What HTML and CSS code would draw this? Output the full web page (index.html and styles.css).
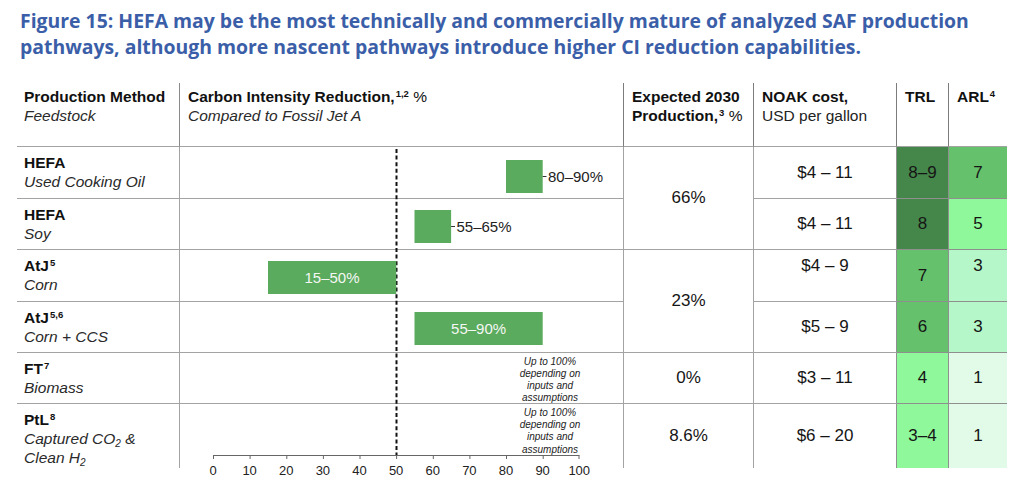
FILE: index.html
```html
<!DOCTYPE html>
<html lang="en">
<head>
<meta charset="utf-8">
<title>Figure 15: SAF production pathways</title>
<link rel="stylesheet" href="styles.css">
</head>
<body>
<div class="page">
  <h1 class="title">Figure 15: HEFA may be the most technically and commercially mature of analyzed SAF production<br>pathways, although more nascent pathways introduce higher CI reduction capabilities.</h1>

  <div class="table">
    <!-- header -->
    <div class="hcell"><span class="hb">Production Method</span><span class="hi">Feedstock</span></div>
    <div class="hcell"><span class="hb">Carbon Intensity Reduction,<sup>1,2</sup> <span class="reg">%</span></span><span class="hi">Compared to Fossil Jet A</span></div>
    <div class="hcell"><span class="hb">Expected 2030</span><span class="hb">Production,<sup>3</sup> <span class="reg">%</span></span></div>
    <div class="hcell"><span class="hb">NOAK cost,</span><span class="hr">USD per gallon</span></div>
    <div class="hcell"><span class="hb">TRL</span></div>
    <div class="hcell hlast"><span class="hb">ARL<sup>4</sup></span></div>

    <!-- row 1 -->
    <div class="label"><span class="hb">HEFA</span><span class="hi">Used Cooking Oil</span></div>
    <div class="chart-col">
      <div class="crow"></div><div class="crow"></div><div class="crow"></div>
      <div class="crow"></div><div class="crow"></div><div class="crow clast"></div>
      <svg class="chart" width="444" height="321" viewBox="0 0 444 321" aria-label="Carbon intensity reduction chart">
        <line class="dash" x1="216.5" y1="2" x2="216.5" y2="308"/>
        <rect class="bar" x="326" y="13" width="36.7" height="33"/>
        <line class="lead" x1="362.7" y1="29.5" x2="366.5" y2="29.5"/>
        <text class="blab" x="368" y="35">80–90%</text>
        <rect class="bar" x="234.5" y="63" width="36.6" height="33"/>
        <line class="lead" x1="271.1" y1="79.5" x2="275" y2="79.5"/>
        <text class="blab" x="276.5" y="85">55–65%</text>
        <rect class="bar" x="88" y="114" width="128.2" height="33"/>
        <text class="bin" x="152" y="136">15–50%</text>
        <rect class="bar" x="234.5" y="165" width="128.2" height="33"/>
        <text class="bin" x="298.6" y="187">55–90%</text>
        <text class="note" x="370" y="218">Up to 100%</text>
        <text class="note" x="370" y="230">depending on</text>
        <text class="note" x="370" y="242">inputs and</text>
        <text class="note" x="370" y="253.5">assumptions</text>
        <text class="note" x="370" y="269">Up to 100%</text>
        <text class="note" x="370" y="281">depending on</text>
        <text class="note" x="370" y="293">inputs and</text>
        <text class="note" x="370" y="305.5">assumptions</text>
        <line class="axis" x1="33" y1="308.5" x2="399.3" y2="308.5"/>
        <g class="ticks">
          <line x1="33.5" y1="308" x2="33.5" y2="312"/>
          <line x1="70.1" y1="308" x2="70.1" y2="312"/>
          <line x1="106.8" y1="308" x2="106.8" y2="312"/>
          <line x1="143.4" y1="308" x2="143.4" y2="312"/>
          <line x1="180" y1="308" x2="180" y2="312"/>
          <line x1="216.6" y1="308" x2="216.6" y2="312"/>
          <line x1="253.3" y1="308" x2="253.3" y2="312"/>
          <line x1="289.9" y1="308" x2="289.9" y2="312"/>
          <line x1="326.5" y1="308" x2="326.5" y2="312"/>
          <line x1="363.2" y1="308" x2="363.2" y2="312"/>
          <line x1="399" y1="308" x2="399" y2="312"/>
        </g>
      </svg>
    </div>
    <div class="val prod span2">66%</div>
    <div class="val cost">$4 – 11</div>
    <div class="val trl g1">8–9</div>
    <div class="val arl g2">7</div>

    <div class="label"><span class="hb">HEFA</span><span class="hi">Soy</span></div>
    <div class="val cost">$4 – 11</div>
    <div class="val trl g1">8</div>
    <div class="val arl g3">5</div>

    <div class="label"><span class="hb">AtJ<sup>5</sup></span><span class="hi">Corn</span></div>
    <div class="val prod span2">23%</div>
    <div class="val cost top">$4 – 9</div>
    <div class="val trl g2">7</div>
    <div class="val arl g4 top">3</div>

    <div class="label"><span class="hb">AtJ<sup>5,6</sup></span><span class="hi">Corn + CCS</span></div>
    <div class="val cost">$5 – 9</div>
    <div class="val trl g2">6</div>
    <div class="val arl g4">3</div>

    <div class="label"><span class="hb">FT<sup>7</sup></span><span class="hi">Biomass</span></div>
    <div class="val prod">0%</div>
    <div class="val cost">$3 – 11</div>
    <div class="val trl g3">4</div>
    <div class="val arl g5">1</div>

    <div class="label last"><span class="hb">PtL<sup>8</sup></span><span class="hi">Captured CO<sub>2</sub> &amp;</span><span class="hi">Clean H<sub>2</sub></span></div>
    <div class="val prod last">8.6%</div>
    <div class="val cost last">$6 – 20</div>
    <div class="val trl g3 last">3–4</div>
    <div class="val arl g5 last">1</div>
  </div>

  <div class="axis-labels">
    <span>0</span><span>10</span><span>20</span><span>30</span><span>40</span><span>50</span><span>60</span><span>70</span><span>80</span><span>90</span><span>100</span>
  </div>
</div>
</body>
</html>
```

FILE: styles.css
```css
* { box-sizing: border-box; }

html, body { height: 100%; }

body {
  margin: 0;
  background: #ffffff;
  font-family: "Liberation Sans", Arial, sans-serif;
  color: #111;
}

.page {
  min-height: 488px;
}

.title {
  margin: 0;
  padding: 8px 0 0 20px;
  font: 700 19.4px/26px "Open Sans", "DejaVu Sans", sans-serif;
  color: #3b5ea8;
  white-space: nowrap;
}

.table {
  display: grid;
  grid-template-columns: 163px 444px 130px 143px 52px 58px;
  grid-template-rows: 64px 52px 51px 52px 51px 51px 64px;
  width: 990px;
  margin: 23px 0 0 17px;
}

/* header */
.hcell {
  padding: 5px 6px 0 8px;
  font-size: 15.5px;
  line-height: 18.5px;
  border-right: 1px solid #7c7c7c;
  border-bottom: 1px solid #a3a3a3;
  white-space: nowrap;
}
.hcell:first-child { padding-left: 7px; border-right-color: #8a8a8a; }
.hcell.hlast { border-right: none; }

.hb { display: block; font-weight: 700; color: #111; }
.hi { display: block; font-style: italic; color: #2a2a2a; }
.hr { display: block; color: #222; }
.reg { font-weight: 400; }

sup {
  font-size: 9.5px;
  line-height: 0;
  vertical-align: 5px;
  margin-left: 1px;
}
sub {
  font-size: 10px;
  line-height: 0;
  vertical-align: -3px;
}

/* row labels */
.label {
  padding: 6px 6px 0 7px;
  font-size: 15.5px;
  line-height: 19px;
  border-right: 1px solid #a3a3a3;
  border-bottom: 1px solid #a3a3a3;
  white-space: nowrap;
}
.label.last { border-bottom: none; }

/* chart column */
.chart-col {
  grid-column: 2;
  grid-row: 2 / span 6;
  position: relative;
  display: grid;
  grid-template-rows: 52px 51px 52px 51px 51px 64px;
  border-right: 1px solid #a3a3a3;
}
.crow { border-bottom: 1px solid #a3a3a3; }
.crow.clast { border-bottom: none; }

.chart {
  position: absolute;
  left: 0;
  top: 0;
  font-family: "Liberation Sans", Arial, sans-serif;
}
.bar { fill: #5aab5d; }
.dash { stroke: #111; stroke-width: 2; stroke-dasharray: 4 2.6; }
.lead { stroke: #333; stroke-width: 1; }
.blab { font-size: 15px; fill: #222; }
.bin { font-size: 15px; fill: #f4f7f4; text-anchor: middle; }
.note { font-size: 10px; font-style: italic; fill: #222; text-anchor: middle; }
.axis { stroke: #666; stroke-width: 1; }
.ticks line { stroke: #666; stroke-width: 1; }

/* axis labels row, under the chart column */
.axis-labels {
  display: grid;
  grid-template-columns: repeat(11, 36.63px);
  margin: -4px 0 0 194.7px;
  height: 20px;
  font-size: 13px;
  line-height: 13px;
  color: #222;
}
.axis-labels span { text-align: center; }

/* value cells */
.val {
  display: flex;
  align-items: center;
  justify-content: center;
  font-size: 17px;
  line-height: 20px;
  color: #151515;
  border-bottom: 1px solid #a3a3a3;
}
.val.top { align-items: flex-start; padding-top: 6px; }
.val.last { border-bottom: none; }
.span2 { grid-row: span 2; }

.prod { border-right: 1px solid #a3a3a3; }
.cost { border-right: 1px solid #8f8f8f; }
.trl { border-right: 1px solid #8f8f8f; border-bottom-color: #8f8f8f; }
.arl { border-bottom-color: #8f8f8f; }

.g1 { background: #45874b; }
.g2 { background: #66c16c; }
.g3 { background: #8ef89a; }
.g4 { background: #b5f7c9; }
.g5 { background: #e1fbe8; }
```
